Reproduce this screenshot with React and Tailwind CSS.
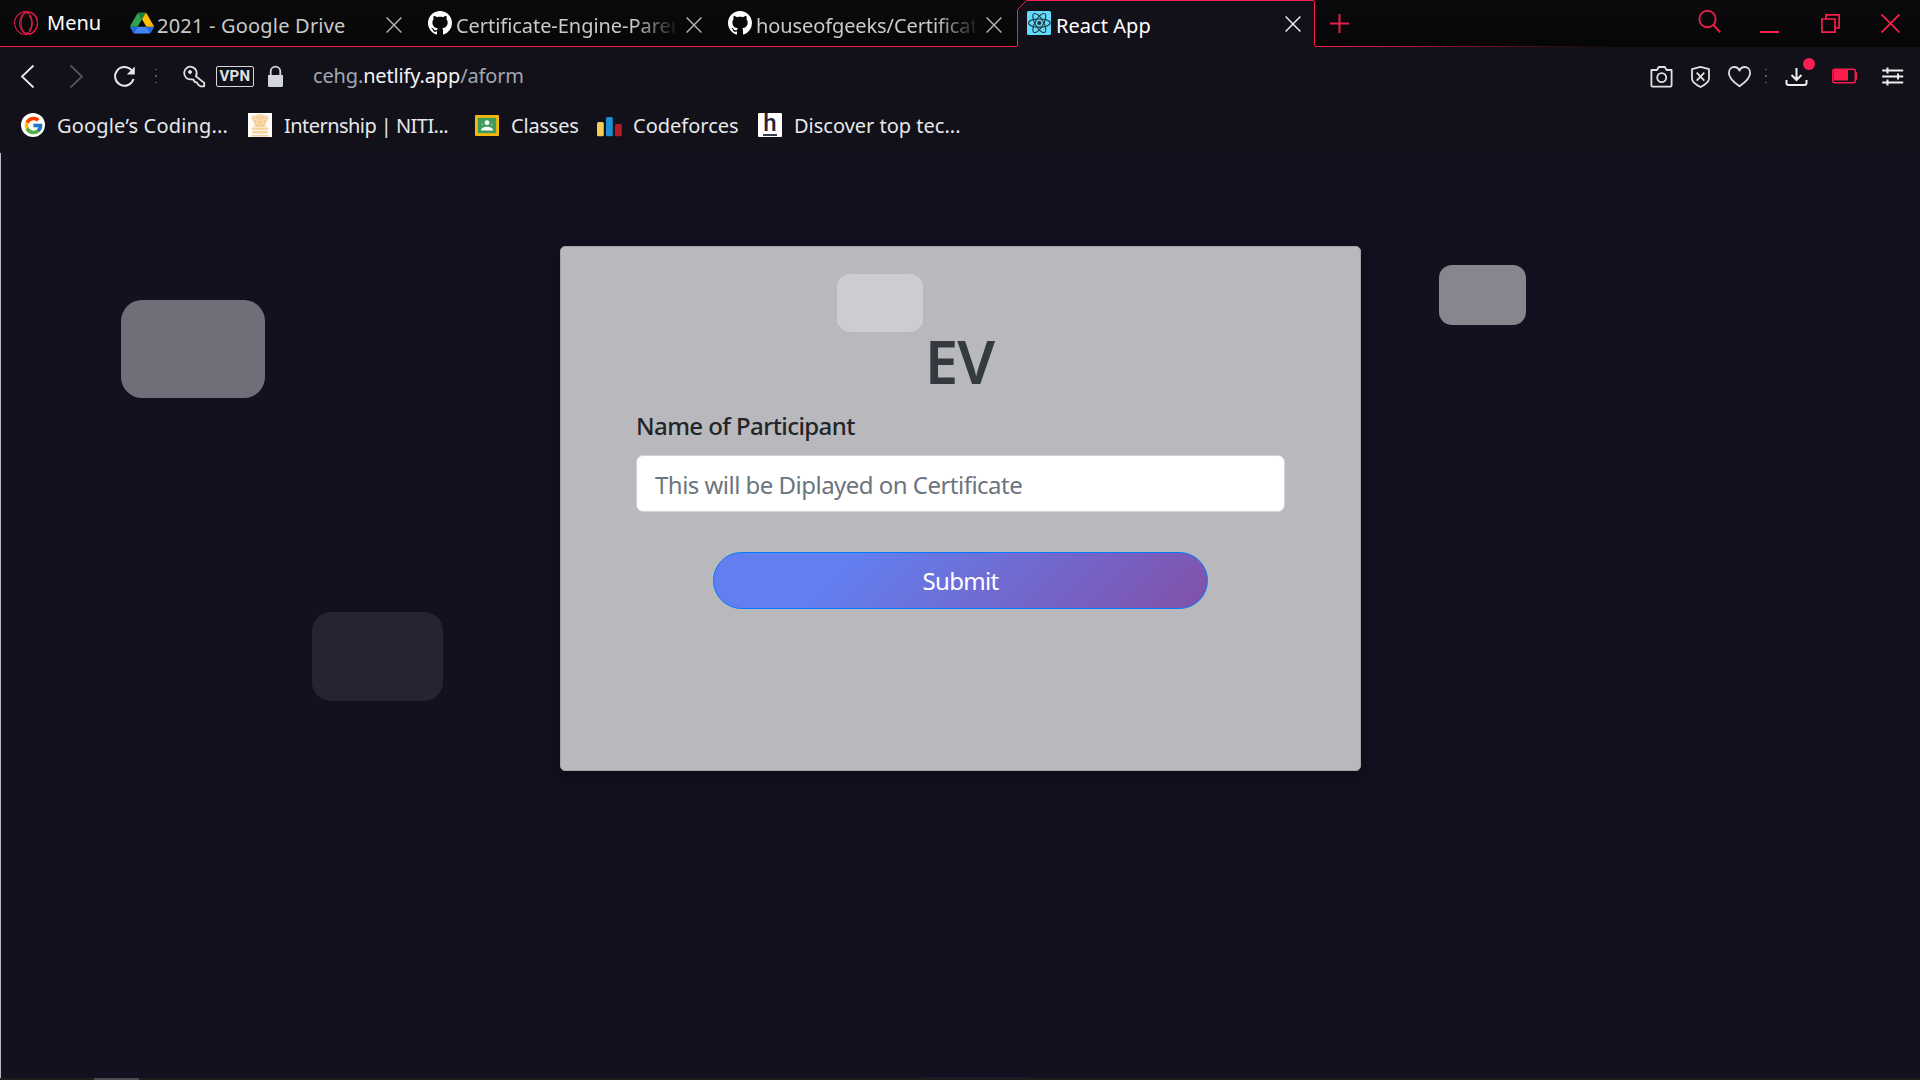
import React from "react";
import { FcGoogle } from "react-icons/fc";

function OperaIcon() {
  return (
    <svg className="h-6 w-6 shrink-0" viewBox="0 0 24 24" fill="none" stroke="#e01a47" strokeWidth="1.1">
      <circle cx="12" cy="12" r="11.4" />
      <ellipse cx="14.6" cy="12" rx="9" ry="11" />
      <ellipse cx="12.6" cy="12" rx="5.6" ry="10.2" />
      <path d="M15.2 4.8c3.6 3.6 3.6 10.8 0 14.4" />
    </svg>
  );
}

function DriveIcon() {
  return (
    <svg className="h-6 w-6 shrink-0" viewBox="-0.5 -5 88.3 88" preserveAspectRatio="xMidYMid meet">
      <path fill="#2369e6" d="m6.6 66.85 3.85 6.65c.8 1.4 1.95 2.5 3.3 3.3l13.75-23.8h-27.5c0 1.55.4 3.1 1.2 4.5z" />
      <path fill="#2da44e" d="m43.65 25-13.75-23.8c-1.35.8-2.5 1.9-3.3 3.3l-25.4 44a9.06 9.06 0 0 0-1.2 4.5h27.5z" />
      <path fill="#2369e6" d="m73.55 76.8c1.35-.8 2.5-1.9 3.3-3.3l1.6-2.75 7.65-13.25c.8-1.4 1.2-2.95 1.2-4.5h-27.5l5.85 11.5z" />
      <path fill="#1c8140" d="m43.65 25 13.75-23.8c-1.35-.8-2.9-1.2-4.5-1.2h-18.5c-1.6 0-3.15.45-4.5 1.2z" />
      <path fill="#4285f4" d="m59.8 53h-32.3l-13.75 23.8c1.35.8 2.9 1.2 4.5 1.2h50.8c1.6 0 3.15-.45 4.5-1.2z" />
      <path fill="#fbbc05" d="m73.4 26.5-12.7-22c-.8-1.4-1.95-2.5-3.3-3.3l-13.75 23.8 16.15 28h27.45c0-1.55-.4-3.1-1.2-4.5z" />
    </svg>
  );
}

function GithubIcon() {
  return (
    <svg className="h-6 w-6 shrink-0" viewBox="0 0 16 16" fill="#ffffff">
      <path d="M8 0C3.58 0 0 3.58 0 8c0 3.54 2.29 6.53 5.47 7.59.4.07.55-.17.55-.38 0-.19-.01-.82-.01-1.49-2.01.37-2.53-.49-2.69-.94-.09-.23-.48-.94-.82-1.13-.28-.15-.68-.52-.01-.53.63-.01 1.08.58 1.23.82.72 1.21 1.87.87 2.33.66.07-.52.28-.87.51-1.07-1.78-.2-3.64-.89-3.64-3.95 0-.87.31-1.59.82-2.15-.08-.2-.36-1.02.08-2.12 0 0 .67-.21 2.2.82.64-.18 1.32-.27 2-.27s1.36.09 2 .27c1.53-1.04 2.2-.82 2.2-.82.44 1.1.16 1.92.08 2.12.51.56.82 1.27.82 2.15 0 3.07-1.87 3.75-3.65 3.95.29.25.54.73.54 1.48 0 1.07-.01 1.93-.01 2.2 0 .21.15.46.55.38A8.01 8.01 0 0 0 16 8c0-4.42-3.58-8-8-8z" />
    </svg>
  );
}

function ReactIcon() {
  return (
    <svg className="h-6 w-6 shrink-0" viewBox="0 0 24 24" fill="none" stroke="#20323a" strokeWidth="1.05">
      <rect width="24" height="24" rx="1.5" fill="#61dafb" stroke="none" />
      <ellipse cx="12.3" cy="12" rx="10.8" ry="4.1" />
      <ellipse cx="12.3" cy="12" rx="10.8" ry="4.1" transform="rotate(60 12.3 12)" />
      <ellipse cx="12.3" cy="12" rx="10.8" ry="4.1" transform="rotate(120 12.3 12)" />
      <circle cx="12.3" cy="12" r="2.1" fill="#20323a" stroke="none" />
    </svg>
  );
}

function CloseIcon({ className }) {
  return (
    <svg className={className} viewBox="0 0 16 16" fill="none" stroke="currentColor" strokeWidth="1.4">
      <path d="M.6.6l14.8 14.8M15.4.6L.6 15.4" />
    </svg>
  );
}

function Tab({ icon, title, tabClass, titleClass }) {
  return (
    <div className={`flex h-[47px] shrink-0 border-b border-[#f01c4c] pl-[10px] text-[#c9c9ca] ${tabClass}`}>
      <div className="mt-[11px]">{icon}</div>
      <div className={`mt-3 overflow-hidden whitespace-nowrap text-[20px] leading-7 ${titleClass}`}>{title}</div>
      <CloseIcon className="ml-[11px] mt-[17px] h-4 w-4 shrink-0 text-[#b4b6b9]" />
    </div>
  );
}

function ActiveTab() {
  return (
    <div className="relative flex h-[47px] w-[298px] shrink-0 pl-[10px] text-white">
      <svg className="absolute left-0 top-0 h-[47px] w-[300px]" viewBox="0 0 300 47" fill="none">
        <path d="M.5 47V9.5L9.5 .5H296.5L297.5 2V45L298.5 47Z" fill="#121018" />
        <path d="M.5 46V9.5L9.5 .5H296.5L297.5 2V45L298.5 46.5H300" stroke="#fa1e4e" />
      </svg>
      <div className="relative mt-[11px]"><ReactIcon /></div>
      <div className="relative ml-[5px] mt-3 w-[218px] whitespace-nowrap text-[20px] leading-7 tracking-[0.05px]">React App</div>
      <CloseIcon className="relative ml-[11px] mt-[16px] h-4 w-4 shrink-0 text-[#f2f3f4]" />
    </div>
  );
}

function TabStrip() {
  return (
    <div className="flex h-[47px] bg-gradient-to-b from-[#0b0b0d] to-[#060607]">
      <div className="flex h-[47px] w-[120px] shrink-0 border-b border-[#f01c4c] pl-[14px] text-white">
        <div className="mt-[11px]"><OperaIcon /></div>
        <div className="ml-[9px] mt-[9px] text-[20px] leading-7">Menu</div>
      </div>
      <Tab icon={<DriveIcon />} title="2021 - Google Drive" tabClass="w-[298px]" titleClass="ml-[3px] w-[218px] tracking-[0.2px]" />
      <Tab icon={<GithubIcon />} title="Certificate-Engine-Parent" tabClass="w-[300px]" titleClass="ml-1 w-[219px] tracking-[-0.05px] [mask-image:linear-gradient(to_right,#000_178px,transparent_224px)]" />
      <Tab icon={<GithubIcon />} title="houseofgeeks/Certificate" tabClass="w-[299px]" titleClass="ml-1 w-[219px] tracking-[-0.1px] [mask-image:linear-gradient(to_right,#000_180px,transparent_224px)]" />
      <ActiveTab />
      <div className="flex h-[47px] flex-1 flex-col">
        <div className="flex h-[46px] text-[#fa1e4e]">
          <svg className="ml-[15px] mt-[14px] h-[19px] w-[19px]" viewBox="0 0 19 19" fill="none" stroke="#e81f4d" strokeWidth="2">
            <path d="M9.5 0V19M0 9.5H19" />
          </svg>
          <svg className="ml-[349px] mt-[9px] h-6 w-6" viewBox="0 0 24 24" fill="none" stroke="#e81c4b" strokeWidth="1.9">
            <circle cx="9.5" cy="10" r="8.2" />
            <path d="M15.3 16l7 7.5" />
          </svg>
          <svg className="ml-[38px] mt-[14px] h-[19px] w-[19px]" viewBox="0 0 19 19" fill="none" stroke="currentColor" strokeWidth="2">
            <path d="M0 18H19" />
          </svg>
          <svg className="ml-[42px] mt-[14px] h-[19px] w-[19px]" viewBox="0 0 19 19" fill="none" stroke="currentColor" strokeWidth="1.7">
            <path d="M.9 5H14v13.1H.9zM5 5V.9h13.1V14H14" />
          </svg>
          <svg className="ml-[41px] mt-[14px] h-[19px] w-[19px]" viewBox="0 0 19 19" fill="none" stroke="currentColor" strokeWidth="1.8">
            <path d="M.5.5l18 18M18.5.5l-18 18" />
          </svg>
        </div>
        <div className="h-px w-[300px] bg-gradient-to-r from-[#fa1e4e] to-transparent" />
      </div>
    </div>
  );
}

function Dots({ className }) {
  return (
    <div className={`flex w-[2px] flex-col gap-[5px] ${className}`}>
      <span className="h-[1.5px] bg-[#5b5a62]" />
      <span className="h-[1.5px] bg-[#5b5a62]" />
      <span className="h-[1.5px] bg-[#5b5a62]" />
    </div>
  );
}

function Icon({ className = "", children }) {
  return (
    <svg className={`h-6 w-6 shrink-0 ${className}`} viewBox="0 0 24 24" fill="none" stroke="currentColor" strokeWidth="1.8" strokeLinejoin="round">
      {children}
    </svg>
  );
}

function Toolbar() {
  return (
    <div className="flex h-[58px] items-center text-[#dfe2e4]">
      <Icon className="ml-[16px] text-[#e8eaeb]"><path d="M17.5 1.5L6 12.5l11.5 11" strokeLinejoin="miter" /></Icon>
      <Icon className="ml-[24px] text-[#56555c]"><path d="M6.5 1.5L18 12.5l-11.5 11" strokeLinejoin="miter" /></Icon>
      <Icon className="ml-[24px] text-[#e4e6e8]">
        <path d="M19.6 6.2A9.4 9.4 0 1 0 21.5 15" strokeWidth="2" />
        <path d="M22.8 2.5v8h-8z" fill="currentColor" stroke="none" />
      </Icon>
      <Dots className="ml-[19px]" />
      <Icon className="ml-[25px]">
        <path d="M13.9 12.2a6.3 6.3 0 1 0-4.7 3.1l2.3.4 1.3 2.3 2 .4 1.7 2.6 2 1.3h3.7v-3.4z" />
        <circle cx="8" cy="8" r="1.5" fill="currentColor" strokeWidth="1" />
      </Icon>
      <div className="ml-[10px] mt-px flex h-[21px] w-[38px] items-center justify-center rounded-[2px] border border-[#d5d8da] font-['Roboto',sans-serif] text-[15px] font-bold leading-none tracking-[0.3px]">VPN</div>
      <Icon className="ml-[10px] text-[#d3d7db]">
        <path d="M4 11h15v10.5a1.5 1.5 0 0 1-1.5 1.5h-12a1.5 1.5 0 0 1-1.5-1.5z" fill="currentColor" stroke="none" />
        <path d="M6.7 11.5V7.5a4.8 4.8 0 0 1 9.6 0v4" />
      </Icon>
      <div className="ml-[25px] flex-1 whitespace-nowrap text-[20px] leading-7 tracking-[-0.15px] text-[#a0a8b3]">
        cehg.<span className="text-[#f4f5f6]">netlify.app</span>/aform
      </div>
      <Icon>
        <path d="M2.9 6H8l1.8-3h6l1.8 3h5v15.5a1.2 1.2 0 0 1-1.2 1.2H3.6a1.2 1.2 0 0 1-1.2-1.2V6z" />
        <circle cx="12.7" cy="13.6" r="4.5" />
      </Icon>
      <Icon className="ml-[15px]">
        <path d="M12.5 2.8l8.5 2.4v9.5c0 3.4-4 6-8.500 8.3-4.500-2.300-8.500-4.900-8.500-8.300V5.200z" />
        <path d="M8.7 8.7l7.6 8M16.3 8.7l-7.6 8" />
      </Icon>
      <Icon className="ml-[15px]">
        <path d="M12.5 22.3C6.5 18 1.9 13.8 1.9 8.9 1.9 5.3 4.4 3 7.3 3c2.2 0 4.2 1.3 5.2 3.6C13.5 4.3 15.5 3 17.7 3c2.9 0 5.4 2.3 5.4 5.9 0 4.9-4.6 9.1-10.6 13.4z" />
      </Icon>
      <Dots className="ml-[14px]" />
      <div className="relative ml-[17px]">
        <Icon className="text-[#eceeef]">
          <path d="M12.5 4v12M7.5 11l5 5 5-5" strokeLinejoin="miter" strokeWidth="2" />
          <path d="M2.5 16v3a2 2 0 0 0 2 2h16a2 2 0 0 0 2-2V16" strokeWidth="2" />
        </Icon>
        <span className="absolute -top-[6px] left-[19px] h-3 w-3 rounded-full bg-[#fa1e4e]" />
      </div>
      <svg className="ml-[24px] h-4 w-[26px] shrink-0" viewBox="0 0 26 16" fill="none">
        <rect x=".8" y="1.3" width="22.5" height="13.4" rx="2" stroke="#fa1e4e" strokeWidth="1.5" />
        <rect x="2" y="2" width="14" height="10.5" fill="#fa1e4e" />
        <rect x="23" y="4" width="2" height="8" rx="1" fill="#fa1e4e" />
      </svg>
      <Icon className="ml-[23px] mr-[15px] text-[#eceeef]">
        <path d="M1.2 6.5h21M1.2 12.5h21M1.2 18.5h21M6.5 3.5v6M17 9.5v6M6.5 15.5v6" strokeWidth="2" />
      </Icon>
    </div>
  );
}

function EmblemIcon() {
  return (
    <svg className="h-6 w-6" viewBox="0 0 24 24">
      <rect width="24" height="24" fill="#fffdf8" />
      <path d="M8 2.5c1-2 7-2 8 0 3-1 5 .5 4.5 3.5-.3 1.5-1.5 2.5-2.5 3.5l-.5 4.5H6.5L6 9.5C5 8.5 3.8 7.5 3.5 6 3 3 5 1.5 8 2.5z" fill="#f8d8aa" />
      <path d="M8.5 4.5H10M14 4.5h1.5M11 6h2M6.5 7L8 9M17.5 7L16 9M10 8l2 1.5L14 8M9 11v2.5M12 11v2.5M15 11v2.5" stroke="#ecb873" strokeWidth=".9" fill="none" />
      <path d="M4 14.5h16V17H4zM4.5 18h15v2.500h-15zM3.500 22h17v1.500h-17z" fill="#f7d29c" />
    </svg>
  );
}

function ClassroomIcon() {
  return (
    <svg className="h-6 w-6" viewBox="0 0 24 24">
      <rect y="2" width="24" height="21" rx="1" fill="#f6b80c" />
      <rect x="2.8" y="4.8" width="18.4" height="15.4" fill="#3f9b5a" />
      <circle cx="12" cy="9.7" r="2.4" fill="#fff" />
      <circle cx="7.3" cy="11.5" r="1.2" fill="#6db586" />
      <circle cx="16.7" cy="11.5" r="1.2" fill="#6db586" />
      <path d="M6 17.5c0-5 12-5 12 0z" fill="#fff" />
    </svg>
  );
}

function CodeforcesIcon() {
  return (
    <svg className="h-6 w-[26px]" viewBox="0 0 26 24">
      <rect x="0" y="9" width="6.8" height="14.2" rx="1.5" fill="#f5cc58" />
      <rect x="9" y="4" width="6.8" height="19.2" rx="1.5" fill="#1b8fcf" />
      <rect x="18" y="11" width="6.8" height="12.2" rx="1.5" fill="#b41c26" />
    </svg>
  );
}

function HackerEarthIcon() {
  return (
    <div className="flex h-6 w-6 flex-col items-center rounded-[1px] bg-white font-['Roboto',sans-serif] text-[24px] font-medium leading-[20px] text-[#23233a]">
      <span className="h-[20px]">h</span>
      <span className="mt-px h-[1.5px] w-[14px] bg-[#3c3c50]" />
    </div>
  );
}

function Bookmark({ icon, label, className, labelClass }) {
  return (
    <div className={`flex h-10 shrink-0 items-center ${className}`}>
      <div className="h-6 w-6 shrink-0">{icon}</div>
      <span className={`mt-px whitespace-nowrap text-[20px] leading-7 ${labelClass}`}>{label}</span>
    </div>
  );
}

function BookmarksBar() {
  return (
    <div className="flex h-12 pl-[21px] text-[#e6e8ea]">
      <Bookmark
        className="w-[227px]"
        labelClass="ml-3 tracking-[0.18px]"
        label="Google’s Coding..."
        icon={<div className="flex h-6 w-6 items-center justify-center rounded-full bg-white"><FcGoogle size={21} /></div>}
      />
      <Bookmark className="w-[227px]" labelClass="ml-3 tracking-[-0.55px]" label="Internship | NITI..." icon={<EmblemIcon />} />
      <Bookmark className="w-[122px]" labelClass="ml-3 tracking-[-0.2px]" label="Classes" icon={<ClassroomIcon />} />
      <Bookmark className="w-[161px]" labelClass="ml-3" label="Codeforces" icon={<CodeforcesIcon />} />
      <Bookmark className="w-[220px]" labelClass="ml-3" label="Discover top tec..." icon={<HackerEarthIcon />} />
    </div>
  );
}

function CertificateForm() {
  return (
    <form className="mx-auto h-[525px] w-[801px] rounded-[5px] border border-[#a4a4a7] bg-[#b9b8bc] px-[75px] pt-[78px] shadow-[0_5px_9px_rgba(0,0,0,0.2),0_8px_30px_rgba(0,0,0,0.22)]">
      <h1 className="pr-[2px] text-center text-[60px] font-semibold leading-[72px] tracking-[-1px] text-[#343a40]">EV</h1>
      <label className="mt-[11px] block text-[24px] font-medium leading-9 tracking-[-0.58px] text-[#212529]">Name of Participant</label>
      <input
        className="mt-[11px] block h-[57px] w-full rounded-[7px] border border-[#ced4da] bg-white px-[18px] pt-[2px] text-[24px] tracking-[-0.52px] placeholder:text-[#6c757d]"
        placeholder="This will be Diplayed on Certificate"
      />
      <button
        type="button"
        className="mx-auto mt-10 block h-[57px] w-[495px] rounded-full border border-[#007bff] bg-[linear-gradient(135deg,#637eef_27%,#8151a9)] text-[24px] leading-[55px] tracking-[-0.7px] text-white"
      >
        Submit
      </button>
    </form>
  );
}

export default function App() {
  return (
    <div className="h-[1080px] w-[1920px] overflow-hidden bg-[#121120] font-['Noto_Sans',sans-serif]">
      <header className="h-[153px] bg-[#121018]">
        <TabStrip />
        <Toolbar />
        <BookmarksBar />
      </header>
      <main className="relative h-[925px] border-l border-[#b9b8bc] pt-[93px]">
        <CertificateForm />
        <div className="absolute left-[120px] top-[147px] h-[98px] w-[144px] rounded-[21px] bg-[#706f79]" />
        <div className="absolute left-[311px] top-[459px] h-[89px] w-[131px] rounded-[19px] bg-[#252430]" />
        <div className="absolute left-[836px] top-[121px] h-[58px] w-[86px] rounded-[13px] bg-[#cdccd0]" />
        <div className="absolute left-[1438px] top-[112px] h-[60px] w-[87px] rounded-[13px] bg-[#87868f]" />
        <div className="absolute bottom-0 left-[924px] h-px w-[103px] bg-[#1c1a2a]" />
      </main>
      <footer className="flex h-[2px] bg-[#1e1e1e] pl-[94px]">
        <div className="w-[45px] bg-[#4c4c4e]" />
      </footer>
    </div>
  );
}
